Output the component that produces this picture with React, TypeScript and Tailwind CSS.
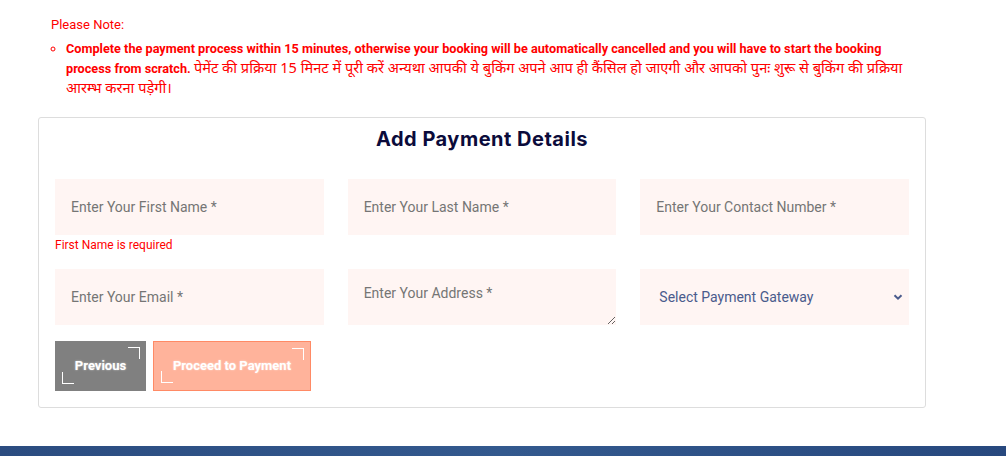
import React from 'react';

const inputCls =
  'w-full h-[56px] bg-[#fff5f3] px-4 text-[14px] text-[#333] placeholder:text-[#757575] outline-none border-0';

const Corners: React.FC = () => (
  <>
    <span className="absolute top-[6px] right-[6px] w-[12px] h-[12px] border-t border-r border-white" />
    <span className="absolute bottom-[7px] left-[7px] w-[12px] h-[12px] border-b border-l border-white" />
  </>
);

export default function App() {
  return (
    <div className="min-h-[456px] bg-white flex flex-col font-['Roboto',sans-serif]">
      <div className="ml-[38px] w-[888px] pt-[17px]">
        <p className="pl-[13px] text-[13px] leading-[16px] text-[#ff0000]">Please Note:</p>
        <ul className="mt-[6px] pl-[28px] list-[circle] marker:text-[#ff0000] text-[#ff0000]">
          <li className="text-[12.7px] leading-[19px] pr-[14px]">
            <span className="font-bold">
              Complete the payment process within 15 minutes, otherwise your booking will be automatically cancelled and you will have to start the booking process from scratch.
            </span>{' '}
            <span className="text-[14.6px] leading-[19px] font-['Noto_Sans','Noto_Sans_Devanagari',sans-serif]">
              पेमेंट की प्रक्रिया 15 मिनट में पूरी करें अन्यथा आपकी ये बुकिंग अपने आप ही कैंसिल हो जाएगी और आपको पुनः शुरू से बुकिंग की प्रक्रिया आरम्भ करना पड़ेगी।
            </span>
          </li>
        </ul>

        <div className="mt-[19px] border border-[#dddddd] rounded-[3px] px-4 pb-4 pt-[7px]">
          <h2 className="text-center text-[20px] leading-[28px] tracking-[0.5px] font-bold text-[#0b0b3b] font-['Inter',sans-serif] mb-[26px]">
            Add Payment Details
          </h2>

          <div className="grid grid-cols-3 gap-x-[24px] gap-y-[16px]">
            <div>
              <input className={inputCls} placeholder="Enter Your First Name *" />
              <p className="mt-[2px] text-[12px] leading-[16px] text-[#ff0000]">First Name is required</p>
            </div>
            <div>
              <input className={inputCls} placeholder="Enter Your Last Name *" />
            </div>
            <div>
              <input className={inputCls} placeholder="Enter Your Contact Number *" />
            </div>

            <div>
              <input className={inputCls} placeholder="Enter Your Email *" />
            </div>
            <div>
              <textarea
                className="block w-full h-[56px] bg-[#fff5f3] px-4 pt-[14px] text-[14px] leading-[20px] text-[#333] placeholder:text-[#757575] outline-none border-0"
                placeholder="Enter Your Address *"
              />
            </div>
            <div className="relative">
              <select
                defaultValue=""
                className="w-full h-[56px] bg-[#fff5f3] pl-[19px] pr-8 text-[14px] text-[#4a5b8c] outline-none border-0 appearance-none"
              >
                <option value="" disabled>
                  Select Payment Gateway
                </option>
              </select>
              <svg
                className="absolute right-[6px] top-[23px] pointer-events-none"
                width="10"
                height="10"
                viewBox="0 0 10 10"
                fill="none"
              >
                <path d="M1.5 3.2L5 6.7L8.5 3.2" stroke="#4a5b8c" strokeWidth="2" />
              </svg>
            </div>
          </div>

          <div className="mt-[16px] flex gap-[7px]">
            <button className="relative w-[91px] h-[50px] bg-[#808080] text-white text-[13px] font-bold [text-shadow:0_0_2px_rgba(255,255,255,0.6)]">
              Previous
              <Corners />
            </button>
            <button className="relative w-[158px] h-[50px] bg-[#ffb39b] border border-[#ff8a65] text-white text-[13px] font-bold [text-shadow:0_0_2px_rgba(255,255,255,0.6)]">
              Proceed to Payment
              <Corners />
            </button>
          </div>
        </div>
      </div>

      <div className="mt-auto h-[10px] bg-gradient-to-r from-[#2b4c80] via-[#33598e] to-[#27487e]" />
    </div>
  );
}
